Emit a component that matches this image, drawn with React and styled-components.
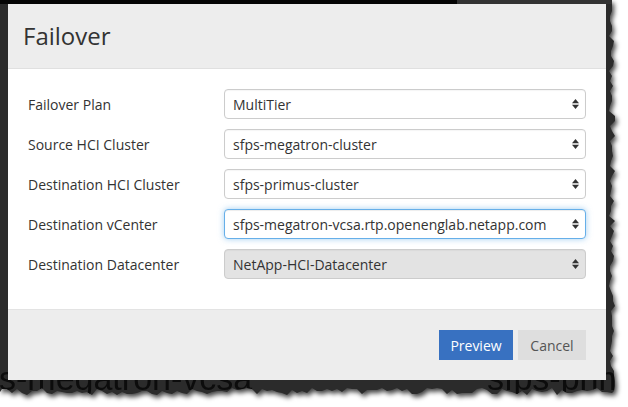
import React from "react";
import styled, { createGlobalStyle } from "styled-components";

const Global = createGlobalStyle`
  html, body { margin: 0; padding: 0; background: #ffffff; overflow: hidden; }
  body { font-family: "Open Sans", "Noto Sans", Arial, sans-serif; }
  * { box-sizing: border-box; }
`;

function tornPolygon() {
  let seed = 7;
  const rnd = () => {
    seed = (seed * 9301 + 49297) % 233280;
    return seed / 233280;
  };
  const pts = ["0px 0px", "612px 0px"];
  for (let y = 6; y < 392; y += 5) {
    const x = 609 + Math.round(rnd() * 6);
    pts.push(`${x}px ${y}px`);
  }
  for (let x = 612; x > 0; x -= 5) {
    const y = 388 + Math.round(rnd() * 7);
    pts.push(`${x}px ${y}px`);
  }
  pts.push("0px 392px");
  return `polygon(${pts.join(",")})`;
}

const Page = styled.div`
  width: 628px;
  height: 407px;
  background: #ffffff;
`;

const ShadowWrap = styled.div`
  width: 620px;
  height: 400px;
  filter: drop-shadow(2px 3px 2.5px rgba(0, 0, 0, 0.75));
`;

const Backdrop = styled.div`
  position: relative;
  width: 620px;
  height: 400px;
  padding: 4px 0 0 8px;
  background:
    linear-gradient(to right, #050505 457px, #333333 457px) top left / 100% 4px no-repeat,
    #2b2b2b;
  overflow: hidden;
`;

const BehindText = styled.div`
  position: absolute;
  top: 358px;
  left: ${(p) => p.$left}px;
  font-family: "Liberation Sans", Arial, sans-serif;
  font-size: 34px;
  line-height: 40px;
  color: #0c0c0c;
  white-space: nowrap;
`;

const Modal = styled.div`
  position: relative;
  width: 598px;
  height: 376px;
  display: flex;
  flex-direction: column;
  background: #ffffff;
`;

const Header = styled.div`
  height: 65px;
  display: flex;
  align-items: center;
  padding: 0 15px;
  background: #ededed;
  border-bottom: 1px solid #e0e0e0;
`;

const Title = styled.h4`
  margin: 0;
  font-size: 24px;
  font-weight: 400;
  line-height: 1.1;
  color: #333333;
`;

const Body = styled.div`
  flex: 1;
  display: flex;
  flex-direction: column;
  gap: 10px;
  padding: 20px 20px 0 20px;
`;

const Row = styled.div`
  display: grid;
  grid-template-columns: 196px 1fr;
  align-items: center;
  height: 30px;
`;

const Label = styled.label`
  font-size: 14px;
  color: #333333;
  padding-top: 1px;
`;

const Select = styled.div`
  position: relative;
  height: 30px;
  display: flex;
  align-items: center;
  padding: 0 8px;
  font-size: 14px;
  color: #333333;
  border-radius: 4px;
  border: 1px solid ${(p) => (p.$focused ? "#66afe9" : "#cccccc")};
  background: ${(p) => (p.$disabled ? "#e3e3e3" : "#ffffff")};
  box-shadow: ${(p) =>
    p.$focused
      ? "inset 0 1px 1px rgba(0,0,0,.075), 0 0 6px rgba(102,175,233,.6)"
      : "inset 0 1px 1px rgba(0,0,0,.04)"};
`;

const Arrow = styled.svg`
  position: absolute;
  right: 5px;
  top: 50%;
  margin-top: -6px;
  width: 9px;
  height: 12px;
`;

const Footer = styled.div`
  height: 71px;
  display: flex;
  align-items: center;
  justify-content: flex-end;
  gap: 5px;
  padding: 0 20px;
  background: #ededed;
  border-top: 1px solid #e3e3e3;
`;

const Button = styled.button`
  height: 30px;
  width: ${(p) => p.$w}px;
  padding: 0;
  border: none;
  border-radius: 0;
  font-family: inherit;
  font-size: 14px;
  color: ${(p) => (p.$primary ? "#ffffff" : "#555555")};
  background: ${(p) => (p.$primary ? "#3871c1" : "#dedede")};
`;

const Updown = () => (
  <Arrow viewBox="0 0 9 12">
    <path d="M4.5 1 L8 5.2 L1 5.2 Z" fill="#333" />
    <path d="M4.5 11 L8 6.8 L1 6.8 Z" fill="#333" />
  </Arrow>
);

const fields = [
  { label: "Failover Plan", value: "MultiTier" },
  { label: "Source HCI Cluster", value: "sfps-megatron-cluster" },
  { label: "Destination HCI Cluster", value: "sfps-primus-cluster" },
  { label: "Destination vCenter", value: "sfps-megatron-vcsa.rtp.openenglab.netapp.com", focused: true },
  { label: "Destination Datacenter", value: "NetApp-HCI-Datacenter", disabled: true },
];

export default function App() {
  const clip = React.useMemo(() => tornPolygon(), []);
  return (
    <Page>
      <Global />
      <ShadowWrap>
        <Backdrop style={{ clipPath: clip }}>
          <BehindText $left={-1}>s-megatron-vcsa</BehindText>
          <BehindText $left={487}>sfps-prim</BehindText>
          <Modal>
            <Header>
              <Title>Failover</Title>
            </Header>
            <Body>
              {fields.map((f) => (
                <Row key={f.label}>
                  <Label>{f.label}</Label>
                  <Select $focused={f.focused} $disabled={f.disabled}>
                    {f.value}
                    <Updown />
                  </Select>
                </Row>
              ))}
            </Body>
            <Footer>
              <Button $primary $w={74}>Preview</Button>
              <Button $w={68}>Cancel</Button>
            </Footer>
          </Modal>
        </Backdrop>
      </ShadowWrap>
    </Page>
  );
}
